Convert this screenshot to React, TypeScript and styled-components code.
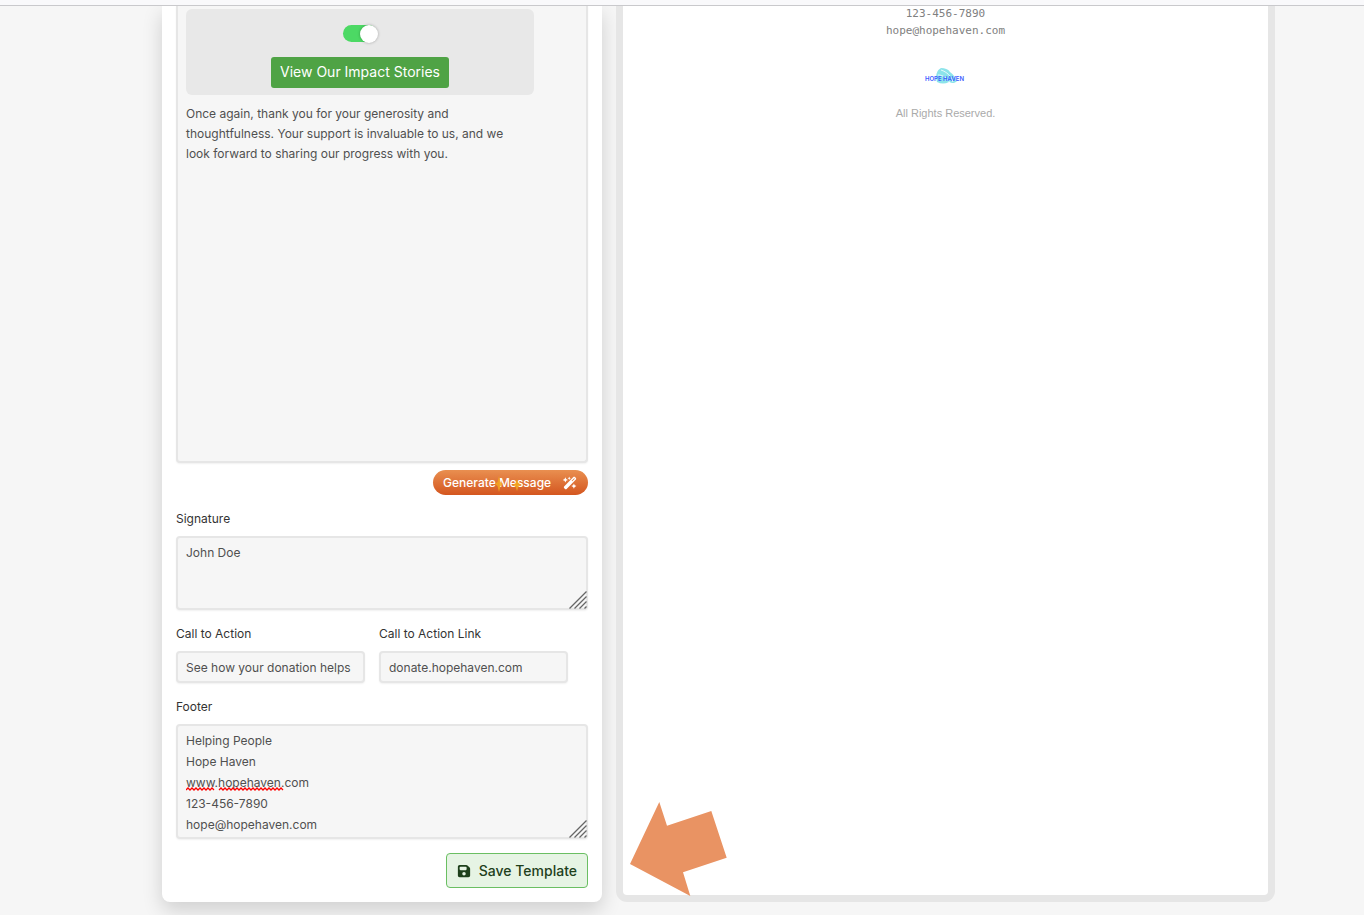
import React from "react";
import styled, { createGlobalStyle } from "styled-components";
import { FaFloppyDisk, FaWandMagicSparkles } from "react-icons/fa6";

const GlobalStyle = createGlobalStyle`
  *, *::before, *::after { box-sizing: border-box; }
  body {
    margin: 0;
    background: #f6f6f6;
    color: #505050;
    font-family: Inter, "Liberation Sans", sans-serif;
    font-size: 12px;
  }
`;

const TopBar = styled.header`
  height: 6px;
  background: #f9f9fb;
  border-bottom: 1px solid #c9c9cc;
  position: relative;
  z-index: 1;
`;

const Page = styled.main`
  display: grid;
  grid-template-columns: minmax(0, 440fr) minmax(0, 659fr);
  gap: 14px;
  padding: 0 89px 13px 162px;
  overflow: hidden;
`;

const FormCard = styled.form`
  display: flex;
  flex-direction: column;
  padding: 0 14px 14px;
  background: #fff;
  border-radius: 0 0 8px 8px;
  box-shadow: 0 8px 20px rgba(0, 0, 0, 0.16);
`;

const Editor = styled.div`
  display: flex;
  flex-direction: column;
  min-height: 457px;
  padding: 3px 52px 8px 8px;
  background: #f6f6f6;
  border: 2px solid #e6e6e6;
  border-top: 0;
  border-radius: 0 0 4px 4px;
  box-shadow: 0 1px 2px rgba(0, 0, 0, 0.06);
`;

const ActionBlock = styled.div`
  display: flex;
  flex-direction: column;
  align-items: center;
  gap: 15px;
  padding: 16px 8px 7px;
  background: #e8e8e8;
  border-radius: 6px;
`;

const Toggle = styled.input`
  appearance: none;
  display: flex;
  justify-content: flex-end;
  align-items: center;
  width: 34px;
  height: 17px;
  margin: 0;
  border-radius: 9px;
  background: #4cd964;

  &::before {
    content: "";
    flex: none;
    width: 18px;
    height: 18px;
    margin-right: -1px;
    border-radius: 50%;
    background: #fff;
    box-shadow: 0 0 3px rgba(0, 0, 0, 0.3);
  }

  &:not(:checked) {
    justify-content: flex-start;
    background: #bbb;
  }
`;

const ImpactButton = styled.button`
  height: 31px;
  padding: 0 9px 1px;
  border: 0;
  border-radius: 3px;
  background: #4fa345;
  color: #fff;
  font: 400 14px/20px Inter, sans-serif;
`;

const Message = styled.p`
  margin: 9px 0 0;
  line-height: 20px;
`;

const GenerateButton = styled.button`
  position: relative;
  align-self: flex-end;
  display: flex;
  align-items: center;
  justify-content: space-between;
  width: 155px;
  height: 25px;
  margin-top: 7px;
  padding: 0 11px 0 10px;
  border: 0;
  border-radius: 13px;
  background: linear-gradient(#e98f50, #d4561f);
  color: #fff;
  font: 500 12px/20px Inter, sans-serif;
`;

const Sparkles = styled.svg`
  position: absolute;
  left: 60px;
  top: 6px;
`;

const Field = styled.div`
  display: flex;
  flex-direction: column;
  gap: 7px;
  margin-top: 14px;
`;

const FieldRow = styled.div`
  display: grid;
  grid-template-columns: 1fr 1fr;
  gap: 14px;
  padding-right: 20px;
`;

const Label = styled.label`
  line-height: 20px;
  color: #333;
`;

const AreaWrap = styled.div`
  position: relative;
  display: flex;
`;

const Area = styled.textarea<{ $height: number }>`
  width: 100%;
  height: ${(p) => p.$height}px;
  padding: 4px 8px;
  border: 2px solid #e6e6e6;
  border-radius: 4px;
  background: #f6f6f6;
  box-shadow: 0 1px 2px rgba(0, 0, 0, 0.06);
  color: #505050;
  font: 400 12px/21px Inter, sans-serif;
  resize: none;
  overflow: hidden;
  outline: 0;
`;

const Grip = styled.svg`
  position: absolute;
  right: 0;
  bottom: 0;
`;

const Squiggles = styled.svg`
  position: absolute;
  left: 10px;
  top: 63px;
`;

const TextInput = styled.input`
  width: 100%;
  height: 32px;
  padding: 0 8px;
  border: 2px solid #e6e6e6;
  border-radius: 4px;
  background: #f6f6f6;
  box-shadow: 0 1px 2px rgba(0, 0, 0, 0.06);
  color: #505050;
  font: 400 12px/20px Inter, sans-serif;
  outline: 0;
`;

const SaveButton = styled.button`
  align-self: flex-end;
  display: flex;
  align-items: center;
  justify-content: space-between;
  width: 142px;
  height: 35px;
  margin-top: 14px;
  padding: 0 10px;
  border: 1px solid #6abf62;
  border-radius: 4px;
  background: #e6f4e4;
  color: #1e401b;
  font: 500 14px/20px Inter, sans-serif;
`;

const Preview = styled.section`
  position: relative;
  display: flex;
  flex-direction: column;
  align-items: center;
  background: #fff;
  border: 7px solid #e6e6e6;
  border-top: 0;
  border-radius: 0 0 11px 11px;
`;

const Contact = styled.address`
  margin-top: -1px;
  color: #808080;
  font: normal 11px/17px "DejaVu Sans Mono", monospace;
  text-align: center;
`;

const Logo = styled.svg`
  display: block;
  margin-top: 29px;
`;

const Rights = styled.p`
  margin: 20px 0 0;
  color: #aaa;
  font: 11px/18px "Liberation Sans", sans-serif;
`;

const Arrow = styled.svg`
  position: absolute;
  left: 7px;
  bottom: -1px;
`;

const ResizeGrip = () => (
  <Grip width="20" height="20" viewBox="0 0 20 20" stroke="#666" strokeWidth="1.3" aria-hidden="true">
    <path d="M1.5 18.5 18.500 1.5M6.5 18.5 18.500 6.5M11.5 18.5 18.500 11.5M16.5 18.5 18.500 16.500" />
  </Grip>
);

const wave = (from: number, to: number) => {
  let d = `M${from} 3`;
  for (let x = from + 2, up = true; x <= to; x += 2, up = !up) d += `L${x} ${up ? 1 : 3}`;
  return d;
};

export default function App() {
  return (
    <>
      <GlobalStyle />
      <TopBar />
      <Page>
        <FormCard onSubmit={(e) => e.preventDefault()}>
          <Editor>
            <ActionBlock>
              <Toggle type="checkbox" defaultChecked aria-label="Show button" />
              <ImpactButton type="button">View Our Impact Stories</ImpactButton>
            </ActionBlock>
            <Message>
              Once again, thank you for your generosity and
              <br />
              thoughtfulness. Your support is invaluable to us, and we
              <br />
              look forward to sharing our progress with you.
            </Message>
          </Editor>
          <GenerateButton type="button">
            Generate Message
            <FaWandMagicSparkles size={14} aria-hidden="true" />
            <Sparkles width="30" height="16" viewBox="0 0 30 16" fill="#f5a81c" opacity="0.85" aria-hidden="true">
              <path d="M6 0 7.500 6 10 8 7.500 10 6 16 4.500 10 2 8 4.500 6zM24 3l1.500 4 3 2-3 1.500L24 15l-1.500-4.500-3-1.500 3-2z" />
            </Sparkles>
          </GenerateButton>
          <Field>
            <Label htmlFor="signature">Signature</Label>
            <AreaWrap>
              <Area id="signature" $height={74} defaultValue="John Doe" spellCheck={false} />
              <ResizeGrip />
            </AreaWrap>
          </Field>
          <FieldRow>
            <Field>
              <Label htmlFor="cta">Call to Action</Label>
              <TextInput id="cta" defaultValue="See how your donation helps" />
            </Field>
            <Field>
              <Label htmlFor="cta-link">Call to Action Link</Label>
              <TextInput id="cta-link" defaultValue="donate.hopehaven.com" />
            </Field>
          </FieldRow>
          <Field>
            <Label htmlFor="footer">Footer</Label>
            <AreaWrap>
              <Area
                id="footer"
                $height={115}
                spellCheck={false}
                defaultValue={"Helping People\nHope Haven\nwww.hopehaven.com\n123-456-7890\nhope@hopehaven.com"}
              />
              <Squiggles width="100" height="4" viewBox="0 0 100 4" fill="none" stroke="#f00" strokeWidth="1.3" aria-hidden="true">
                <path d={wave(0, 29) + wave(33, 97)} />
              </Squiggles>
              <ResizeGrip />
            </AreaWrap>
          </Field>
          <SaveButton type="submit">
            <FaFloppyDisk size={14} aria-hidden="true" />
            Save Template
          </SaveButton>
        </FormCard>
        <Preview>
          <Contact>
            123-456-7890
            <br />
            hope@hopehaven.com
          </Contact>
          <Logo width="42" height="16" viewBox="0 0 42 16" role="img" aria-label="Hope Haven">
            <path d="M12 14C10 7 12 2 16 0c4 0 7 1 9 4 3 2 5 5 7 9-3 3-5 2-8 1-4 2-8 2-12 0z" fill="#8ce4ea" />
            <path d="M13 7c5 0 9 3 12 8M16 2c6 2 10 6 12 12" stroke="#fff" strokeWidth="0.8" fill="none" />
            <text x="0" y="13" fontFamily="Inter, sans-serif" fontWeight="600" fontSize="6" fill="#3b5bff">HOPE HAVEN</text>
          </Logo>
          <Rights>All Rights Reserved.</Rights>
          <Arrow width="97" height="94" viewBox="0 0 97 94" fill="#e99363" aria-hidden="true">
            <path d="M29.300 0 37 23.700 81.300 9 96.700 55.700 53 70.300 60.300 94 0 62z" />
          </Arrow>
        </Preview>
      </Page>
    </>
  );
}
